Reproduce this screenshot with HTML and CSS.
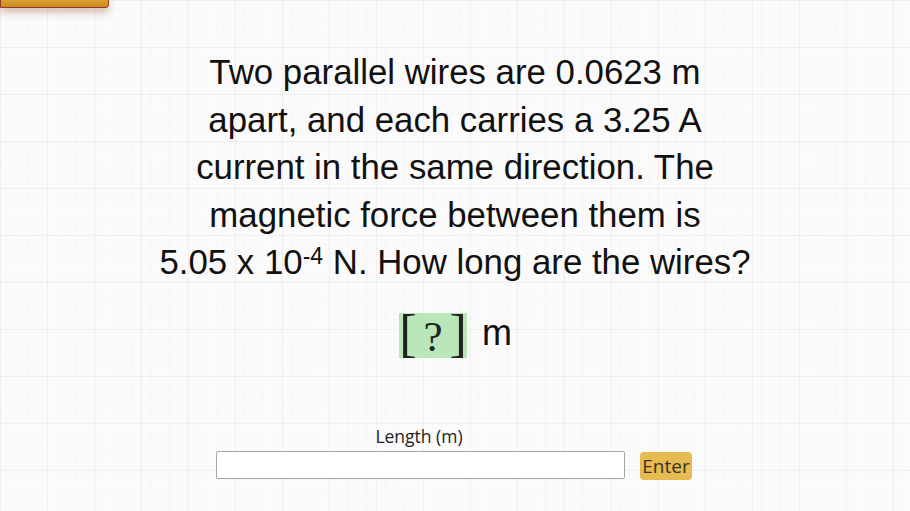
FILE: index.html
```html
<!DOCTYPE html>
<html>
<head>
<meta charset="utf-8">
<link rel="stylesheet" href="styles.css">
</head>
<body>
<div class="tab"></div>
<main class="page">
  <p class="question">Two parallel wires are 0.0623 m<br>apart, and each carries a 3.25 A<br>current in the same direction. The<br>magnetic force between them is<br>5.05 x 10<sup>-4</sup> N. How long are the wires?</p>
  <div class="answer">
    <span class="blank"><span class="br">[</span><span class="q">?</span><span class="br">]</span></span>
    <span class="unit">m</span>
  </div>
  <div class="form">
    <label class="label">Length (m)</label>
    <div class="row">
      <input class="field" type="text">
      <button class="enter">Enter</button>
    </div>
  </div>
</main>
</body>
</html>
```
FILE: styles.css
```css
html, body {
  margin: 0;
  padding: 0;
  width: 910px;
  height: 511px;
  overflow: hidden;
}
body {
  background-color: #fcfbfb;
  background-image:
    linear-gradient(to right, rgba(200,195,195,0.16) 1px, transparent 1px),
    linear-gradient(to bottom, rgba(200,195,195,0.16) 1px, transparent 1px),
    linear-gradient(to right, rgba(215,210,210,0.12) 1px, transparent 1px),
    linear-gradient(to bottom, rgba(215,210,210,0.12) 1px, transparent 1px);
  background-size: 47px 47px, 47px 47px, 9.4px 9.4px, 9.4px 9.4px;
  font-family: "Liberation Sans", Arial, sans-serif;
  position: relative;
}
.tab {
  position: absolute;
  left: 0;
  top: -3px;
  width: 107px;
  height: 9px;
  background: linear-gradient(#e0a838, #c98a22);
  border: 1px solid #9a3b2c;
  border-radius: 0 0 3px 0;
  box-shadow: 0 5px 7px rgba(150, 90, 60, 0.35);
}
.page {
  display: flex;
  flex-direction: column;
  align-items: center;
  padding-top: 48px;
}
.question {
  margin: 0;
  font-size: 34.8px;
  line-height: 47.5px;
  text-align: center;
  color: #111;
}
.question sup {
  font-size: 23px;
  vertical-align: 10px;
  line-height: 0;
}
.answer {
  display: flex;
  align-items: center;
  margin-top: 27px;
  margin-left: 1px;
}
.blank {
  display: flex;
  align-items: center;
  background: #b9e7b9;
  height: 45px;
  font-family: "Liberation Serif", "Times New Roman", serif;
  color: #222;
}
.br {
  font-size: 52px;
  line-height: 45px;
  position: relative;
  top: -2px;
}
.q {
  font-size: 43px;
  line-height: 45px;
  padding: 0 7px;
  position: relative;
  top: 1px;
}
.unit {
  font-size: 36px;
  margin-left: 15px;
  color: #111;
  position: relative;
  top: -2px;
}
.form {
  display: flex;
  flex-direction: column;
  align-items: center;
  margin-top: 67px;
  font-family: "Open Sans", sans-serif;
}
.label {
  font-size: 17.5px;
  color: #222;
  margin-left: -72px;
  line-height: 22px;
}
.row {
  display: flex;
  align-items: center;
  gap: 15px;
  margin-top: 4px;
  margin-left: -2px;
}
.field {
  width: 409px;
  height: 28px;
  box-sizing: border-box;
  border: 1px solid #a5a5a5;
  border-radius: 2px;
  background: #fff;
  margin: 0;
}
.enter {
  height: 28px;
  width: 52px;
  box-sizing: border-box;
  background: #e6bb52;
  border: none;
  border-radius: 4px;
  color: #3a3325;
  font-family: "Open Sans", sans-serif;
  font-size: 19px;
  padding: 0;
  margin: 0;
  position: relative;
  top: 1px;
}
```
